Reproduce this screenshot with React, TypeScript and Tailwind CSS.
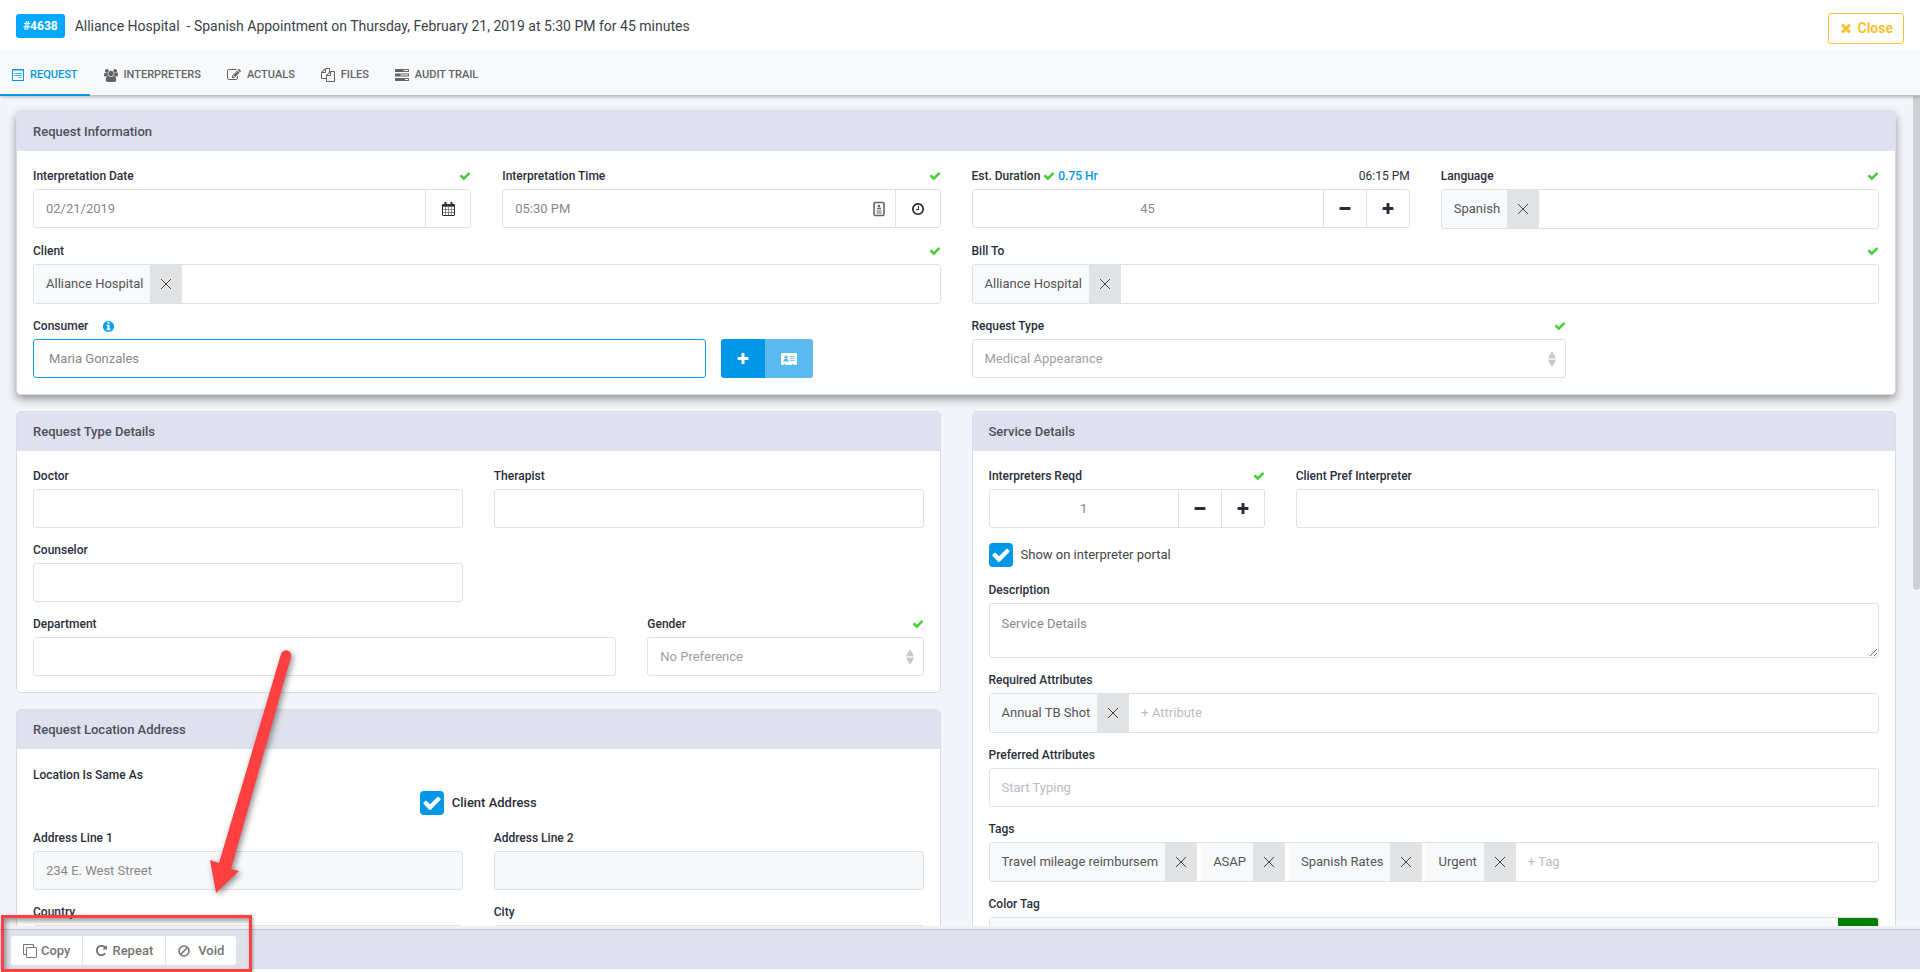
import React, { useId, useState } from 'react'
import clsx from 'clsx'

const ICONS = {
  check: 'M1671 566q0 40-28 68l-724 724-136 136q-28 28-68 28t-68-28l-136-136-362-362q-28-28-28-68t28-68l136-136q28-28 68-28t68 28l294 295 656-657q28-28 68-28t68 28l136 136q28 28 28 68z',
  plus: 'M1600 736v192q0 40-28 68t-68 28h-416v416q0 40-28 68t-68 28h-192q-40 0-68-28t-28-68v-416h-416q-40 0-68-28t-28-68v-192q0-40 28-68t68-28h416v-416q0-40 28-68t68-28h192q40 0 68 28t28 68v416h416q40 0 68 28t28 68z',
  minus: 'M1600 736v192q0 40-28 68t-68 28h-1216q-40 0-68-28t-28-68v-192q0-40 28-68t68-28h1216q40 0 68 28t28 68z',
  times: 'M1490 1322q0 40-28 68l-136 136q-28 28-68 28t-68-28l-294-294-294 294q-28 28-68 28t-68-28l-136-136q-28-28-28-68t28-68l294-294-294-294q-28-28-28-68t28-68l136-136q28-28 68-28t68 28l294 294 294-294q28-28 68-28t68 28l136 136q28 28 28 68t-28 68l-294 294 294 294q28 28 28 68z',
  info: 'M1152 1376v-160q0-14-9-23t-23-9h-96v-512q0-14-9-23t-23-9h-320q-14 0-23 9t-9 23v160q0 14 9 23t23 9h96v320h-96q-14 0-23 9t-9 23v160q0 14 9 23t23 9h448q14 0 23-9t9-23zm-128-896v-160q0-14-9-23t-23-9h-192q-14 0-23 9t-9 23v160q0 14 9 23t23 9h192q14 0 23-9t9-23zm640 416q0 209-103 385.5t-279.5 279.5-385.5 103-385.5-103-279.5-279.5-103-385.5 103-385.5 279.5-279.5 385.5-103 385.5 103 279.5 279.5 103 385.5z',
  clock: 'M1024 544v448q0 14-9 23t-23 9h-320q-14 0-23-9t-9-23v-64q0-14 9-23t23-9h224v-352q0-14 9-23t23-9h64q14 0 23 9t9 23zm416 352q0-148-73-273t-198-198-273-73-273 73-198 198-73 273 73 273 198 198 273 73 273-73 198-198 73-273zm224 0q0 209-103 385.5t-279.5 279.5-385.5 103-385.5-103-279.5-279.5-103-385.5 103-385.5 279.5-279.5 385.5-103 385.5 103 279.5 279.5 103 385.5z',
  repeat: 'M1664 256v448q0 26-19 45t-45 19h-448q-42 0-59-40-17-39 14-69l138-138q-148-137-349-137-104 0-198.5 40.5t-163.5 109.5-109.5 163.5-40.5 198.5 40.5 198.5 109.5 163.5 163.5 109.5 198.5 40.5q119 0 225-52t179-147q7-10 23-12 15 0 25 9l137 138q9 8 9.5 20.5t-7.5 22.5q-109 132-264 204.5t-327 72.5q-156 0-298-61t-245-164-164-245-61-298 61-298 164-245 245-164 298-61q147 0 284.5 55.5t244.5 156.5l130-129q29-31 70-14 39 17 39 59z',
  files: 'M1696 384q40 0 68 28t28 68v1216q0 40-28 68t-68 28h-960q-40 0-68-28t-28-68v-288h-544q-40 0-68-28t-28-68v-672q0-40 20-88t48-76l408-408q28-28 76-48t88-20h416q40 0 68 28t28 68v328q68-40 128-40h416zm-544 213l-299 299h299v-299zm-640-384l-299 299h299v-299zm196 647l316-316v-416h-384v416q0 40-28 68t-68 28h-416v640h512v-256q0-40 20-88t48-76zm956 804v-1152h-384v416q0 40-28 68t-68 28h-416v640h896z',
  pencil: 'M888 1184l116-116-152-152-116 116v56h96v96h56zm440-720q-16-16-33 1l-350 350q-17 17-1 33t33-1l350-350q17-17 1-33zm80 594v190q0 119-84.5 203.5t-203.5 84.5h-832q-119 0-203.5-84.5t-84.5-203.5v-832q0-119 84.5-203.5t203.5-84.5h832q63 0 117 25 15 7 18 23 3 17-9 29l-49 49q-14 14-32 8-23-6-45-6h-832q-66 0-113 47t-47 113v832q0 66 47 113t113 47h832q66 0 113-47t47-113v-126q0-13 9-22l64-64q15-15 35-7t20 29zm-96-738l288 288-672 672h-288v-288zm444 132l-92 92-288-288 92-92q28-28 68-28t68 28l152 152q28 28 28 68t-28 68z',
  users: 'M529 896q-162 5-265 128h-134q-82 0-138-40.5t-56-118.5q0-353 124-353 6 0 43.5 21t97.5 42.5 119 21.5q67 0 133-23-5 37-5 66 0 159 93 293zm1071 637q0 120-73 189.5t-194 69.5h-874q-121 0-194-69.5t-73-189.5q0-53 3.5-103.5t14-109 26.5-108.5 43-97.5 62-81 85.5-53.5 111.5-20q10 0 43 21.5t73 48 107 48 135 21.5 135-21.5 107-48 73-48 43-21.5q61 0 111.5 20t85.5 53.5 62 81 43 97.5 26.5 108.5 14 109 3.5 103.5zm-1024-1277q0 106-75 181t-181 75-181-75-75-181 75-181 181-75 181 75 75 181zm704 384q0 159-112.5 271.5t-271.5 112.5-271.5-112.5-112.5-271.5 112.5-271.5 271.5-112.5 271.5 112.5 112.5 271.5zm576 225q0 78-56 118.5t-138 40.5h-134q-103-123-265-128 93-134 93-293 0-29-5-66 66 23 133 23 59 0 119-21.5t97.5-42.5 43.5-21q124 0 124 353zm-128-609q0 106-75 181t-181 75-181-75-75-181 75-181 181-75 181 75 75 181z'
}

const Icon: React.FC<{ name: keyof typeof ICONS; className?: string }> = ({ name, className }) => (
  <svg
    viewBox={name === 'users' ? '-64 0 1920 1792' : '0 0 1792 1792'}
    fill="currentColor"
    className={clsx('shrink-0', className)}
    aria-hidden="true"
  >
    <path d={ICONS[name]} />
  </svg>
)

const FormIcon = () => (
  <svg viewBox="0 0 12 12" className="size-3 shrink-0" fill="none" stroke="currentColor" aria-hidden="true">
    <rect x=".5" y=".5" width="11" height="11" />
    <path d="M1 1.500h10" opacity=".5" />
    <path d="M2 4.500h1.500M4 4.500h6M2 6.500h1.500M4 6.500h6" opacity=".8" />
    <path d="M6 8.500h4" opacity=".5" />
  </svg>
)

const TasksIcon = () => (
  <svg viewBox="0 0 14 12" className="h-3 w-3.5 shrink-0" fill="currentColor" aria-hidden="true">
    <rect width="14" height="3" rx=".5" />
    <rect y="4.500" width="14" height="3" rx=".5" />
    <rect y="9" width="14" height="3" rx=".5" />
    <path d="M8.5 1h4.500v1h-4.500zM5.500 5.500h7.500v1h-7.500zM10 10h3v1h-3z" fill="#f8f9fb" />
  </svg>
)

const CalendarIcon = () => (
  <svg viewBox="0 0 13 14" className="h-3.5 w-[13px] shrink-0" fill="none" stroke="currentColor" aria-hidden="true">
    <rect x=".5" y="2.5" width="12" height="11" rx=".5" />
    <path d="M.5 3.5h12" strokeWidth="2.4" />
    <path d="M3.5 0v4M9.5 0v4" strokeWidth="2" />
    <path d="M3.5 5v8M6.5 5v8M9.5 5v8M1 7.5h11M1 10.5h11" strokeWidth=".5" />
  </svg>
)

const BadgeIcon = () => (
  <svg viewBox="0 0 12 16" className="h-4 w-3 shrink-0" fill="none" stroke="#666" aria-hidden="true">
    <rect x="1" y="1.5" width="10" height="13" rx="1" strokeWidth="1.6" />
    <circle cx="6" cy="5" r="1.3" fill="#666" stroke="none" />
    <path d="M4 7.500h4" strokeWidth="1.6" />
    <path d="M3.5 10h5M3.5 12h5" />
  </svg>
)

const CardIcon = () => (
  <svg viewBox="0 0 16 12" className="h-3 w-4 shrink-0" aria-hidden="true">
    <rect width="16" height="12" rx="1.2" fill="#fff" />
    <circle cx="5" cy="4.2" r="1.6" fill="#5ab9ef" />
    <path d="M2.4 8.6c0-2 1-2.8 2.6-2.8s2.6.8 2.6 2.8z" fill="#5ab9ef" />
    <path d="M9 3.5h4.5M9 5.5h4.5M9 7.5h4.5" stroke="#5ab9ef" strokeWidth=".8" />
    <path d="M3 11.5h1.500M11 11.5h1.500" stroke="#5ab9ef" />
  </svg>
)

const CopyIcon = () => (
  <svg viewBox="0 0 14 14" className="size-3.5 shrink-0" fill="none" stroke="currentColor" aria-hidden="true">
    <path d="M3.500 10.500h-3v-10h10v3" />
    <rect x="3.500" y="3.500" width="10" height="10" rx=".5" />
  </svg>
)

const BanIcon = () => (
  <svg viewBox="0 0 12 12" className="mr-1 size-3 shrink-0" fill="none" stroke="currentColor" strokeWidth="1.6" aria-hidden="true">
    <circle cx="6" cy="6" r="5" />
    <path d="M2.500 9.500l7-7" />
  </svg>
)

const Valid = () => <Icon name="check" className="size-3 text-[#46cf36]" />

const BOX = 'w-full min-w-0 rounded-[3px] border border-[#dde2e6]'
const INPUT = 'h-[39px] px-3 text-[#888] outline-none placeholder:text-[#b9bdc1]'

interface FieldProps {
  label: string
  id: string
  valid?: boolean
  className?: string
  extra?: React.ReactNode
  children?: React.ReactNode
}

const Field: React.FC<FieldProps> = ({ label, id, valid, className, extra, children }) => (
  <div className={clsx('flex min-w-0 flex-col gap-[3px]', className)}>
    <div className="flex h-5 items-center text-xs text-[#2a2e3b]">
      <label htmlFor={id} className="font-medium">{label}</label>
      {extra}
      {valid && <span className="ml-auto"><Valid /></span>}
    </div>
    {children}
  </div>
)

interface TextFieldProps {
  label: string
  value?: string
  valid?: boolean
  className?: string
  placeholder?: string
  readOnly?: boolean
}

const TextField: React.FC<TextFieldProps> = ({ label, value, valid, className, placeholder, readOnly }) => {
  const id = useId()
  return (
    <Field label={label} id={id} valid={valid} className={className}>
      <input
        id={id}
        defaultValue={value}
        placeholder={placeholder}
        readOnly={readOnly}
        className={clsx(BOX, INPUT, readOnly ? 'bg-[#f7f8fa]' : 'bg-white')}
      />
    </Field>
  )
}

const SelectField: React.FC<{ label: string; option: string; className?: string }> = ({ label, option, className }) => {
  const id = useId()
  return (
    <Field label={label} id={id} valid className={className}>
      <div className="relative">
        <select id={id} className={clsx(BOX, 'h-[39px] appearance-none bg-white px-3 text-[#a0a0a0] outline-none')}>
          <option>{option}</option>
        </select>
        <svg
          viewBox="0 0 8 16"
          className="pointer-events-none absolute top-3 right-2.5 h-4 w-2"
          fill="#c9c9c9"
          aria-hidden="true"
        >
          <path d="M4 0l4 7h-8zM4 16l4-7h-8z" />
          <path d="M0 7.200h8v1.600h-8z" opacity=".4" />
        </svg>
      </div>
    </Field>
  )
}

interface TagFieldProps {
  label: string
  tags: string[]
  valid?: boolean
  placeholder?: string
  className?: string
}

const TagField: React.FC<TagFieldProps> = ({ label, tags, valid, placeholder, className }) => {
  const id = useId()
  const [items, setItems] = useState(tags)
  return (
    <Field label={label} id={id} valid={valid} className={className}>
      <div className={clsx(BOX, 'flex h-10 overflow-hidden bg-white')}>
        <ul className="flex shrink-0 gap-1">
          {items.map(tag => (
            <li key={tag} className="flex bg-[#f8f9fb] text-[#555]">
              <span className="self-center pr-[7px] pl-3">{tag}</span>
              <button
                type="button"
                aria-label={`Remove ${tag}`}
                onClick={() => setItems(prev => prev.filter(t => t !== tag))}
                className="flex w-8 items-center justify-center bg-[#e2e3e5]"
              >
                <svg viewBox="0 0 10 10" className="size-2.5" stroke="#444" aria-hidden="true">
                  <path d="M0 0l10 10M10 0l-10 10" />
                </svg>
              </button>
            </li>
          ))}
        </ul>
        <input
          id={id}
          placeholder={placeholder}
          className="min-w-0 flex-1 px-3 text-[#888] outline-none placeholder:text-[#b9bdc1]"
        />
      </div>
    </Field>
  )
}

interface StepperProps {
  label: string
  initial: number
  valid?: boolean
  extra?: React.ReactNode
  className?: string
}

const Stepper: React.FC<StepperProps> = ({ label, initial, valid, extra, className }) => {
  const id = useId()
  const [value, setValue] = useState(initial)
  return (
    <Field label={label} id={id} valid={valid} extra={extra} className={className}>
      <div className={clsx(BOX, 'flex h-[39px] bg-white text-[#2a2e3b]')}>
        <input
          id={id}
          value={value}
          onChange={e => setValue(Number(e.target.value) || 0)}
          className="min-w-0 flex-1 text-center text-[#888] outline-none"
        />
        <button
          type="button"
          aria-label="Decrease"
          onClick={() => setValue(v => v - 1)}
          className="flex w-[43px] items-center justify-center border-l border-[#dde2e6]"
        >
          <Icon name="minus" className="size-3.5" />
        </button>
        <button
          type="button"
          aria-label="Increase"
          onClick={() => setValue(v => v + 1)}
          className="flex w-[43px] items-center justify-center border-l border-[#dde2e6]"
        >
          <Icon name="plus" className="size-3.5" />
        </button>
      </div>
    </Field>
  )
}

interface AddonFieldProps {
  label: string
  value: string
  button: string
  icon: React.ReactNode
  inner?: React.ReactNode
  className?: string
}

const AddonField: React.FC<AddonFieldProps> = ({ label, value, button, icon, inner, className }) => {
  const id = useId()
  return (
    <Field label={label} id={id} valid className={className}>
      <div className={clsx(BOX, 'flex h-[39px] items-stretch bg-white text-[#2a2e3b]')}>
        <input id={id} defaultValue={value} className="min-w-0 flex-1 px-3 text-[#888] outline-none" />
        {inner && <span className="flex items-center pr-2.5">{inner}</span>}
        <button
          type="button"
          aria-label={button}
          className="flex w-[45px] items-center justify-center border-l border-[#dde2e6]"
        >
          {icon}
        </button>
      </div>
    </Field>
  )
}

const Checkbox: React.FC<{ label: string; strong?: boolean; className?: string }> = ({ label, strong, className }) => {
  const id = useId()
  return (
    <div className={clsx('flex h-6 items-center gap-2', className)}>
      <span className="relative flex size-6">
        <input
          id={id}
          type="checkbox"
          defaultChecked
          className="peer size-6 appearance-none rounded-[4px] border border-[#dde2e6] checked:border-0 checked:bg-[#0097e8]"
        />
        <Icon
          name="check"
          className="pointer-events-none absolute inset-0 m-auto hidden size-5 text-white peer-checked:block"
        />
      </span>
      <label htmlFor={id} className={strong ? 'font-medium text-[#2a2e3b]' : 'text-[#444]'}>{label}</label>
    </div>
  )
}

const Card: React.FC<{ title: string; raised?: boolean; children: React.ReactNode }> = ({ title, raised, children }) => (
  <section
    className={clsx(
      'rounded-[5px] border border-[#d8dbea] bg-white',
      raised && 'shadow-[0_4px_10px_rgba(0,0,0,0.4)]'
    )}
  >
    <h2 className="flex h-[39px] items-center rounded-t-[4px] bg-[#e0e1ee] px-4 font-medium text-[#4d4f5c]">
      {title}
    </h2>
    <div className="flex flex-col gap-3 px-4 pt-[15px] pb-4">{children}</div>
  </section>
)

const TABS = [
  { label: 'Request', icon: <FormIcon /> },
  { label: 'Interpreters', icon: <Icon name="users" className="h-[13px] w-3.5" /> },
  { label: 'Actuals', icon: <Icon name="pencil" className="size-3.5" /> },
  { label: 'Files', icon: <Icon name="files" className="size-3.5" /> },
  { label: 'Audit Trail', icon: <TasksIcon /> }
]

const Header = () => (
  <header className="flex h-[52px] shrink-0 items-center bg-white px-4">
    <span className="flex h-6 items-center rounded-[3px] bg-[#00a8ff] px-[7px] text-xs font-bold text-white">#4638</span>
    <h1 className="ml-2.5 text-sm whitespace-pre text-[#3b3f4a]">
      {'Alliance Hospital  - Spanish Appointment on Thursday, February 21, 2019 at 5:30 PM for 45 minutes'}
    </h1>
    <button
      type="button"
      className="mt-1 ml-auto flex h-[31px] items-center gap-1 rounded-[3px] border border-[#fcc235] px-2.5 text-sm font-bold text-[#fcc235]"
    >
      <Icon name="times" className="size-3.5" />
      Close
    </button>
  </header>
)

const Tabs: React.FC<{ active: string; onSelect: (tab: string) => void }> = ({ active, onSelect }) => (
  <nav className="z-10 flex h-11 shrink-0 gap-0.5 border-b border-[#b9bcc0] bg-[#f8f9fb] shadow-[0_1px_3px_rgba(0,0,0,0.25)]">
    {TABS.map(tab => (
      <button
        key={tab.label}
        type="button"
        onClick={() => onSelect(tab.label)}
        className={clsx(
          '-mb-px flex items-center gap-1.5 border-b-2 px-3 pt-1 text-[11px] font-medium uppercase',
          active === tab.label ? 'border-[#0097e8] text-[#0097e8]' : 'border-transparent text-[#636363]'
        )}
      >
        {tab.icon}
        {tab.label}
      </button>
    ))}
  </nav>
)

const RequestInformation = () => {
  const consumerId = useId()
  return (
    <Card title="Request Information" raised>
      <div className="grid grid-cols-4 gap-x-[31px] gap-y-3">
        <AddonField label="Interpretation Date" value="02/21/2019" button="Open calendar" icon={<CalendarIcon />} />
        <AddonField
          label="Interpretation Time"
          value="05:30 PM"
          button="Pick a time"
          inner={<BadgeIcon />}
          icon={<Icon name="clock" className="size-3.5" />}
        />
        <Stepper
          label="Est. Duration"
          initial={45}
          extra={
            <>
              <span className="mx-[3px]"><Valid /></span>
              <span className="font-medium text-[#0097e8]">0.75 Hr</span>
              <span className="ml-auto">06:15 PM</span>
            </>
          }
        />
        <TagField label="Language" tags={['Spanish']} valid />
        <TagField label="Client" tags={['Alliance Hospital']} valid className="col-span-2" />
        <TagField label="Bill To" tags={['Alliance Hospital']} valid className="col-span-2" />
        <div className="col-span-2 grid grid-cols-12 gap-x-[31px]">
          <Field
            label="Consumer"
            id={consumerId}
            extra={<Icon name="info" className="ml-3.5 size-[13px] text-[#0aa2f5]" />}
            className="col-span-9"
          >
            <input
              id={consumerId}
              defaultValue="Maria Gonzales"
              className="h-[39px] w-full rounded-[3px] border border-[#0aa2f5] bg-white px-[15px] text-[#888] outline-none"
            />
          </Field>
          <div className="col-span-3 -ml-4 flex self-end">
            <button
              type="button"
              aria-label="Add consumer"
              className="flex h-[39px] w-11 items-center justify-center rounded-l-[3px] bg-[#0097e8] text-white"
            >
              <Icon name="plus" className="size-3.5" />
            </button>
            <button
              type="button"
              aria-label="Consumer details"
              className="flex h-[39px] w-12 items-center justify-center rounded-r-[3px] bg-[#5ab9ef]"
            >
              <CardIcon />
            </button>
          </div>
        </div>
        <div className="col-span-2 grid grid-cols-12 gap-x-[31px]">
          <SelectField label="Request Type" option="Medical Appearance" className="col-span-8" />
        </div>
      </div>
    </Card>
  )
}

const RequestTypeDetails = () => (
  <Card title="Request Type Details">
    <div className="grid grid-cols-12 gap-x-[31px] gap-y-3">
      <TextField label="Doctor" className="col-span-6" />
      <TextField label="Therapist" className="col-span-6" />
      <TextField label="Counselor" className="col-span-6" />
      <TextField label="Department" className="col-span-8 col-start-1" />
      <SelectField label="Gender" option="No Preference" className="col-span-4" />
    </div>
  </Card>
)

const LocationAddress = () => (
  <Card title="Request Location Address">
    <div className="py-px">
      <p className="flex h-5 items-center text-xs font-medium text-[#2a2e3b]">Location Is Same As</p>
      <Checkbox label="Client Address" strong className="mt-1.5 justify-center" />
    </div>
    <div className="grid grid-cols-2 gap-x-[31px] gap-y-3">
      <TextField label="Address Line 1" value="234 E. West Street" readOnly />
      <TextField label="Address Line 2" readOnly />
      <TextField label="Country" readOnly />
      <TextField label="City" readOnly />
    </div>
  </Card>
)

const ServiceDetails = () => {
  const descriptionId = useId()
  const colorId = useId()
  return (
    <Card title="Service Details">
      <div className="grid grid-cols-12 gap-x-[31px]">
        <Stepper label="Interpreters Reqd" initial={1} valid className="col-span-4" />
        <TextField label="Client Pref Interpreter" className="col-span-8" />
      </div>
      <Checkbox label="Show on interpreter portal" className="mt-[3px] mb-px" />
      <Field label="Description" id={descriptionId}>
        <textarea
          id={descriptionId}
          defaultValue="Service Details"
          className={clsx(BOX, 'h-[55px] resize-y bg-white px-3 py-2.5 text-[#888] outline-none')}
        />
      </Field>
      <TagField label="Required Attributes" tags={['Annual TB Shot']} placeholder="+ Attribute" />
      <TextField label="Preferred Attributes" placeholder="Start Typing" />
      <TagField
        label="Tags"
        tags={['Travel mileage reimbursem', 'ASAP', 'Spanish Rates', 'Urgent']}
        placeholder="+ Tag"
      />
      <Field label="Color Tag" id={colorId}>
        <div className={clsx(BOX, 'flex h-[39px] overflow-hidden')}>
          <input id={colorId} readOnly className="min-w-0 flex-1 bg-[#f8f9fb] px-3 outline-none" />
          <span className="w-10 bg-[#008000]" />
        </div>
      </Field>
    </Card>
  )
}

const ACTIONS = [
  { label: 'Copy', icon: <CopyIcon /> },
  { label: 'Repeat', icon: <Icon name="repeat" className="size-[13px]" /> },
  { label: 'Void', icon: <BanIcon /> }
]

const Footer = () => (
  <footer className="relative z-10 shrink-0 border-b-3 border-white bg-[#e0e1ee]">
    <div className="h-[3px] bg-[#f0f1f4]" />
    <div className="flex h-10 items-center border-t border-[#bfc1cd] pt-0.5 pl-[11px]">
      <div className="flex h-[29px] divide-x divide-[#e2e3ea] overflow-hidden rounded-[3px] bg-white">
        {ACTIONS.map(action => (
          <button
            key={action.label}
            type="button"
            className="flex items-center gap-1 px-3 font-medium text-[#757575]"
          >
            {action.icon}
            {action.label}
          </button>
        ))}
      </div>
    </div>
  </footer>
)

// red frame and arrow that point at the footer actions
const Callout = () => (
  <>
    <div className="pointer-events-none absolute bottom-0 left-px z-20 h-[57px] w-[251px] border-3 border-[#ff4040] shadow-[inset_2px_3px_5px_rgba(0,0,0,0.4),1px_1px_3px_rgba(0,0,0,0.3)]" />
    <svg
      viewBox="0 0 100 260"
      className="pointer-events-none absolute bottom-[67px] left-[200px] z-20 h-[260px] w-[100px] drop-shadow-[2px_2px_3px_rgba(0,0,0,0.45)]"
      fill="#ff4040"
      aria-hidden="true"
    >
      <path d="M81 9a5 5 0 0 1 10 3L31 224l8 2-23 22-6-33 9 3z" />
    </svg>
  </>
)

export default function App() {
  const [tab, setTab] = useState('Request')

  return (
    <div className="relative flex h-screen flex-col overflow-hidden bg-[#f4f5fa] font-[Roboto,sans-serif] text-[13px]">
      <Header />
      <Tabs active={tab} onSelect={setTab} />
      <div className="flex min-h-0 flex-1">
        <main className="min-w-0 flex-1 overflow-y-auto pt-[15px] pr-[17px] pb-4 pl-4 [scrollbar-width:none]">
          <RequestInformation />
          <div className="mt-4 grid grid-cols-2 items-start gap-[31px]">
            <div className="flex min-w-0 flex-col gap-4">
              <RequestTypeDetails />
              <LocationAddress />
            </div>
            <ServiceDetails />
          </div>
        </main>
        <div className="w-[7px] shrink-0">
          <div className="h-[calc(60%-4px)] rounded-b-full bg-[#cdd1d4]" />
        </div>
      </div>
      <Footer />
      <Callout />
    </div>
  )
}
